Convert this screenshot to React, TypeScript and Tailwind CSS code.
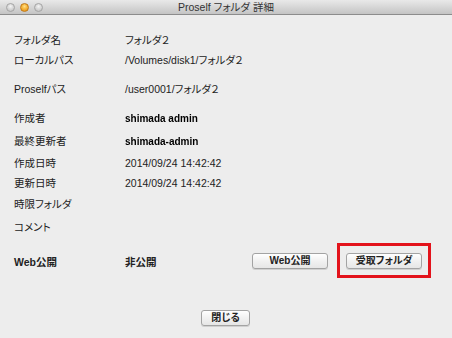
import React from "react";

function Row({ label, value, mt }: { label: string; value?: React.ReactNode; mt: string }) {
  return (
    <div className={`flex items-center h-[14px] pl-[14px] ${mt}`}>
      <div className="w-[111px] shrink-0">{label}</div>
      <div>{value}</div>
    </div>
  );
}

function Light({ orange }: { orange?: boolean }) {
  return orange ? (
    <div className="w-[9px] h-[9px] rounded-full border border-[#c07a1a] bg-[radial-gradient(circle_at_50%_35%,#ffe08a_0%,#f7b63a_45%,#e08a10_100%)]" />
  ) : (
    <div className="w-[9px] h-[9px] rounded-full border border-[#a5a5a5] bg-[radial-gradient(circle_at_50%_35%,#f4f4f4_0%,#d6d6d6_50%,#bdbdbd_100%)]" />
  );
}

function Btn({ children, w }: { children: React.ReactNode; w: string }) {
  return (
    <div
      className={`${w} h-[16px] rounded-[3px] border border-[#a3a3a3] bg-[linear-gradient(#ffffff,#f1f1f1_50%,#e6e6e6)] shadow-[0_1px_0_rgba(0,0,0,0.12)] flex items-center justify-center font-bold text-[10px] text-[#222]`}
    >
      {children}
    </div>
  );
}

export default function App() {
  return (
    <div className="w-[452px] h-[338px] bg-[#ededed] text-[#222] text-[10.5px] leading-[14px] font-['Liberation_Sans','Noto_Sans_CJK_JP',sans-serif] [font-feature-settings:'palt'] overflow-hidden flex flex-col">
      <div className="relative h-[15px] shrink-0 border-b border-[#8c8c8c] bg-[linear-gradient(#e9e9e9,#d3d3d3_60%,#c4c4c4)] flex items-center">
        <div className="flex items-center gap-[5px] pl-[6px]">
          <Light />
          <Light orange />
          <Light />
        </div>
        <div className="absolute inset-0 flex items-center justify-center text-[10.5px] text-[#333]">
          Proself フォルダ 詳細
        </div>
      </div>

      <Row mt="mt-[18px]" label="フォルダ名" value="フォルダ２" />
      <Row mt="mt-[6px]" label="ローカルパス" value="/Volumes/disk1/フォルダ２" />
      <Row mt="mt-[15px]" label="Proselfパス" value="/user0001/フォルダ２" />
      <Row
        mt="mt-[15px]"
        label="作成者"
        value={<span className="font-bold blur-[0.6px] text-[10px] text-black">shimada admin</span>}
      />
      <Row
        mt="mt-[9px]"
        label="最終更新者"
        value={<span className="font-bold blur-[0.6px] text-[10px] text-black">shimada-admin</span>}
      />
      <Row mt="mt-[8px]" label="作成日時" value="2014/09/24 14:42:42" />
      <Row mt="mt-[6px]" label="更新日時" value="2014/09/24 14:42:42" />
      <Row mt="mt-[7px]" label="時限フォルダ" />
      <Row mt="mt-[9px]" label="コメント" />

      <div className="mt-[9px] flex items-center pl-[14px] pr-[21px]">
        <div className="w-[111px] shrink-0 font-bold pt-[3px]">Web公開</div>
        <div className="flex-1 font-bold pt-[3px]">非公開</div>
        <Btn w="w-[76px]">Web公開</Btn>
        <div className="ml-[9px] border-[3px] border-[#e3131b] pt-[7px] pb-[6px] px-[6px]">
          <Btn w="w-[76px]">受取フォルダ</Btn>
        </div>
      </div>

      <div className="mt-[32px] flex justify-center pr-[1px]">
        <Btn w="w-[49px]">閉じる</Btn>
      </div>
    </div>
  );
}
